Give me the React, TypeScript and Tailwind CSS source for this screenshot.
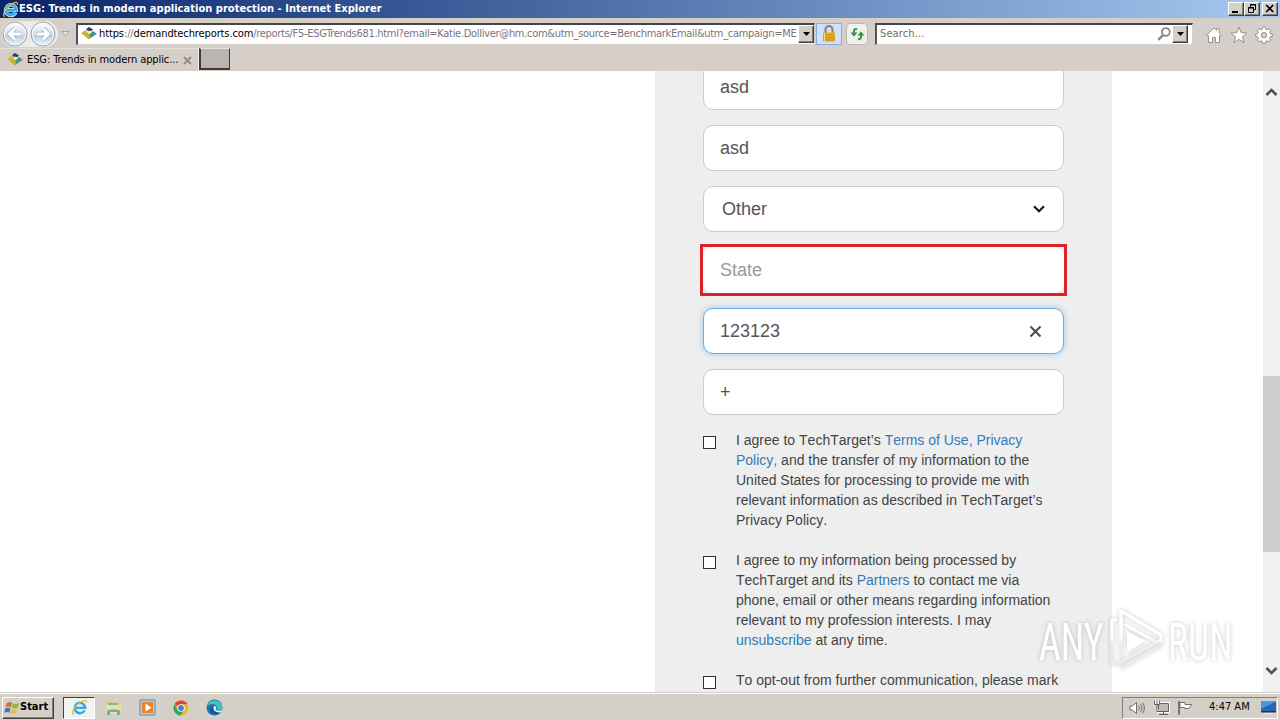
import { FunctionComponent, ReactNode } from "react";

const IeLogo: FunctionComponent<{ size: number }> = ({ size }) => (
  <svg width={size} height={size} viewBox="0 0 18 18" fill="none" className="shrink-0">
    <path d="M14.500 12.200A5.600 5.600 0 1 1 15.100 9.400H5" stroke="#d8f0fc" strokeWidth="3.800" />
    <path d="M14.300 12.200A5.500 5.500 0 1 1 15 9.400H5" stroke="#35a7e4" strokeWidth="2.600" />
    <path
      d="M3.200 16.600C-.6 15.600 3.400 7.600 9.600 3.600c4.200-2.700 7.600-2.900 6.600.4"
      stroke="#eebb2d"
      strokeWidth="1.300"
    />
  </svg>
);

const SiteIcon: FunctionComponent = () => (
  <svg width="16" height="16" viewBox="0 0 16 16" className="shrink-0">
    <path d="M0 7.200 4.500 4l5 5L8 13Z" fill="#e2b320" />
    <path d="m8 13 8-5.200L11.800 5 7 9.400Z" fill="#3d9488" />
    <path d="M2 8.500 8 13.400l1.500-2.900L5.500 7Z" fill="#b5bd35" />
    <path d="m5 3 3.200-2L12 3.400 8.400 6.600Z" fill="#2c3e63" />
    <path d="m6 6 2.300 2.300L11 5.800 8.400 4.500Z" fill="#f3efd2" />
  </svg>
);

const NavCircle: FunctionComponent<{ forward?: boolean }> = ({ forward }) => (
  <svg width="26" height="26" viewBox="0 0 26 26" className="shrink-0">
    <defs>
      <linearGradient id="navFill" x1="0" y1="0" x2="0" y2="1">
        <stop offset="0" stopColor="#fff" />
        <stop offset=".45" stopColor="#dde3ea" />
        <stop offset=".6" stopColor="#c3d1df" />
        <stop offset="1" stopColor="#e8f8fd" />
      </linearGradient>
    </defs>
    <circle cx="13" cy="13" r="12" fill="url(#navFill)" stroke="#93a2b2" />
    <circle cx="13" cy="13" r="10.700" fill="none" stroke="#f5fbff" />
    <path
      d={forward ? "M6 13h12M13 7.500l5.500 5.500-5.500 5.500" : "M20 13H8M13 7.500L7.500 13l5.500 5.500"}
      fill="none"
      stroke="#a3b2c2"
      strokeWidth="4.600"
    />
    <path
      d={forward ? "M6.500 13h12M13 7.500l5.500 5.500-5.500 5.500" : "M19.500 13H8M13 7.500L7.500 13l5.500 5.500"}
      fill="none"
      stroke="#fff"
      strokeWidth="3"
    />
  </svg>
);

const bevel =
  "bg-[#d4d0c8] border border-t-white border-l-white border-r-[#404040] border-b-[#404040] shadow-[inset_-1px_-1px_0_#808080]";

const DropButton: FunctionComponent = () => (
  <div className={`flex h-[18px] w-4 shrink-0 items-center justify-center ${bevel}`}>
    <svg width="7" height="4" viewBox="0 0 7 4">
      <path d="M0 0h7L3.500 4Z" fill="#000" />
    </svg>
  </div>
);

const TitleBar: FunctionComponent = () => (
  <div className="flex h-[18px] items-center bg-linear-to-r from-[#0a246a] to-[#a6caf0] pl-[2px] pr-[2px]">
    <IeLogo size={17} />
    <span className="w-[370px] whitespace-nowrap text-[11px] font-bold tracking-[0.03px] text-white">
      ESG: Trends in modern application protection - Internet Explorer
    </span>
    <div className="ml-auto flex">
      <div className={`h-[14px] w-4 ${bevel}`}>
        <svg width="14" height="12" viewBox="0 0 14 12">
          <path d="M3 8h6v2H3z" />
        </svg>
      </div>
      <div className={`h-[14px] w-4 ${bevel}`}>
        <svg width="14" height="12" viewBox="0 0 14 12" fill="none" stroke="#000">
          <path d="M5.500 4V1.500h5v5H9M5 2h6M3.500 4.500h5v5h-5zM3 5h6" />
        </svg>
      </div>
      <div className={`ml-[2px] h-[14px] w-4 ${bevel}`}>
        <svg width="14" height="12" viewBox="0 0 14 12" fill="none" stroke="#000" strokeWidth="1.700">
          <path d="m3.200 2 7 7M10.200 2l-7 7" />
        </svg>
      </div>
    </div>
  </div>
);

const field =
  "flex h-[22px] items-center bg-white border-t-2 border-l-2 border-t-[#47434a] border-l-[#55515a] border-b border-r border-b-[#d4d0c8] border-r-[#d4d0c8]";

const AddressRow: FunctionComponent = () => (
  <div className="flex h-[29px] items-center">
    <div className="ml-[2px] flex w-[56px] items-center gap-[2px] rounded-full bg-[#eeece9]">
      <NavCircle />
      <NavCircle forward />
    </div>
    <svg width="9" height="6" viewBox="0 0 9 6" className="ml-[3px]">
      <path d="M.8.5h7.400L4.500 5Z" fill="#e6e3de" stroke="#aaa59f" />
    </svg>
    <div className={`ml-[6px] w-[739px] ${field}`}>
      <div className="flex w-[21px] justify-center">
        <SiteIcon />
      </div>
      <div className="w-[699px] whitespace-nowrap text-[11px] tracking-[-0.3px] text-[#77757a]">
        <span className="tracking-[-0.11px]">
          <span className="text-black">https</span>://
          <span className="text-black">demandtechreports.com</span>
        </span>
        /reports/F5-ESGTrends681.html?email=Katie.Dolliver@hm.com&amp;utm_source=BenchmarkEmail&amp;utm_campaign=ME
      </div>
      <DropButton />
    </div>
    <div className="ml-px flex h-[22px] w-[26px] items-center justify-center border border-[#86aee0] bg-[#cfe2fa]">
      <svg width="14" height="17" viewBox="0 0 14 17">
        <path d="M3.500 8V4.500a3.500 3.500 0 0 1 7 0V8" fill="none" stroke="#8c8064" strokeWidth="2" />
        <path d="M1 7.500h12v9H1z" fill="#e9ad25" />
        <path d="M1 10h12M1 12.500h12M1 15h12" stroke="#c98f1f" />
        <path d="M2.500 8v8" stroke="#fbe08a" />
      </svg>
    </div>
    <div className="ml-1 flex h-[22px] w-[22px] items-center justify-center rounded-sm border border-[#bbb9b5] bg-[#eef0ec]">
      <svg width="15" height="14" viewBox="0 0 15 14" fill="none" stroke="#35913c" strokeWidth="2">
        <path d="M7 2.200c-2-.8-3 .3-3 2.300v2" />
        <path d="m.5 5.500 3.500 4 3.500-4Z" fill="#35913c" stroke="none" />
        <path d="M8 12c2 .6 3-.3 3-2.500v-2" />
        <path d="m7.500 8.500 3.500-4 3.500 4Z" fill="#35913c" stroke="none" />
      </svg>
    </div>
    <div className={`ml-[7px] w-[318px] ${field}`}>
      <span className="pl-[3px] text-[11px] tracking-[0.1px] text-[#6d6d6d]">Search...</span>
      <svg width="14" height="14" viewBox="0 0 14 14" className="ml-auto mr-px" fill="none" stroke="#868686">
        <circle cx="8.800" cy="5" r="3.900" strokeWidth="1.800" />
        <path d="M6 8 1.300 12.800" strokeWidth="2.400" />
      </svg>
      <DropButton />
      <div className="w-[4px]" />
    </div>
    <div className="ml-auto mr-[7px] flex items-center gap-[7px] pt-[2px]">
      <svg width="18" height="18" viewBox="0 0 18 18" fill="#fff" stroke="#96918d">
        <path d="M1.500 9 9 1.800l2.800 2.600V2.500h2.400v4.200L16.500 9l-1.400 1.200-.6-.5v6.800h-4v-5h-3v5h-4V9.700l-.6.5Z" />
      </svg>
      <svg width="18" height="18" viewBox="0 0 18 18" fill="#fff" stroke="#96918d">
        <path d="m9 1.200 2.100 5.400 5.800.4-4.400 3.800 1.400 5.700L9 13.400l-4.900 3.100 1.400-5.700L1.100 7l5.800-.4Z" />
      </svg>
      <svg width="18" height="18" viewBox="0 0 18 18" fill="#fff" stroke="#96918d">
        <path d="M7.600 1.200h2.800l.4 2 1.400.6L14 2.600l1.900 1.900-1.200 1.800.6 1.400 2 .4v2.200l-2 .5-.6 1.400 1.200 1.800-1.900 1.900-1.800-1.200-1.400.6-.4 2H7.600l-.4-2-1.400-.6L4 15.900l-1.900-1.900 1.200-1.800-.6-1.400-2-.5V8.100l2-.4.6-1.400L2.100 4.500 4 2.600l1.800 1.200 1.400-.6Z" />
        <circle cx="9" cy="9.200" r="2.700" fill="#d4d0c8" />
      </svg>
    </div>
  </div>
);

const TabRow: FunctionComponent = () => (
  <div className="flex h-[23px] items-start">
    <div className="flex h-[23px] w-[199px] items-center border-t border-r border-t-[#e4e1dc] border-r-[#f5f3f0] pl-[7px]">
      <SiteIcon />
      <span className="ml-1 w-[156px] whitespace-nowrap text-[11px] tracking-[-0.1px] text-black">
        ESG: Trends in modern applic...
      </span>
      <svg width="9" height="9" viewBox="0 0 9 9" stroke="#8f8a86" strokeWidth="1.800">
        <path d="m1 1 7 7M8 1 1 8" />
      </svg>
    </div>
    <div className="h-[22px] w-[31px] border border-b-2 border-l-2 border-[#403c3c] border-t-[#e5e2df] bg-[#bbb4b0]" />
  </div>
);

interface FieldProps {
  value: string;
  focused?: boolean;
  children?: ReactNode;
}

const FormField: FunctionComponent<FieldProps> = ({ value, focused, children }) => (
  <div
    className={`flex h-[46px] w-[361px] shrink-0 items-center justify-between rounded-[10px] border bg-white px-4 text-[18px] text-[#555] ${
      focused
        ? "border-[#66afe9] shadow-[0_0_6px_rgba(102,175,233,0.6)]"
        : "border-[#ccc]"
    }`}
  >
    <span>{value}</span>
    {children}
  </div>
);

const Consent: FunctionComponent<{ children: ReactNode }> = ({ children }) => (
  <div className="flex">
    <div className="mt-[6px] mr-5 h-[13px] w-[13px] shrink-0 border border-[#333] bg-white" />
    <p className="whitespace-nowrap text-[14px] leading-5 text-[#444] [font-kerning:none]">
      {children}
    </p>
  </div>
);

const Link: FunctionComponent<{ children: ReactNode }> = ({ children }) => (
  <span className="text-[#337ab7]">{children}</span>
);

const FormPanel: FunctionComponent = () => (
  <div className="ml-[655px] h-full w-[457px] shrink-0 overflow-hidden bg-[#eee] pl-12 font-['Liberation_Sans',Arial,sans-serif]">
    <div className="-mt-[7px] flex flex-col gap-[15px]">
      <FormField value="asd" />
      <FormField value="asd" />
      <div className="flex h-[46px] w-[361px] items-center justify-between rounded-[10px] border border-[#ccc] bg-white pl-[18px] pr-[18px] text-[18px] text-[#555]">
        <span>Other</span>
        <svg width="12" height="8" viewBox="0 0 12 8" fill="none" stroke="#111" strokeWidth="2">
          <path d="m1 1.300 5 5 5-5" />
        </svg>
      </div>
      {/* required field outline sits outside the input */}
      <div className="-mt-[3px] -mb-[3px] -ml-[3px] h-[52px] w-[367px] border-3 border-[#dd2227]">
        <div className="flex h-[46px] w-[361px] items-center rounded-[10px] bg-white pl-[17px] text-[18px] text-[#999]">
          State
        </div>
      </div>
      <FormField value="123123" focused>
        <svg width="13" height="13" viewBox="0 0 13 13" stroke="#4a4a4a" strokeWidth="2" className="mr-[5px]">
          <path d="m1.500 1.500 10 10M11.500 1.500l-10 10" />
        </svg>
      </FormField>
      <FormField value="+" />
    </div>
    <div className="mt-[15px] flex flex-col gap-5">
      <Consent>
        I agree to TechTarget’s <Link>Terms of Use, Privacy</Link>
        <br />
        <Link>Policy,</Link> and the transfer of my information to the
        <br />
        United States for processing to provide me with
        <br />
        relevant information as described in TechTarget’s
        <br />
        Privacy Policy.
      </Consent>
      <Consent>
        I agree to my information being processed by
        <br />
        TechTarget and its <Link>Partners</Link> to contact me via
        <br />
        phone, email or other means regarding information
        <br />
        relevant to my profession interests. I may
        <br />
        <Link>unsubscribe</Link> at any time.
      </Consent>
      <Consent>To opt-out from further communication, please mark</Consent>
    </div>
  </div>
);

const ScrollBar: FunctionComponent = () => (
  <div className="ml-auto flex w-[17px] flex-col items-center bg-[#f0f0f0]">
    <svg width="13" height="9" viewBox="0 0 13 9" fill="none" stroke="#505050" strokeWidth="2.600" className="mt-[17px]">
      <path d="m1.500 7 5-5 5 5" />
    </svg>
    <div className="mt-[279px] h-[176px] w-full bg-[#cdcdcd]" />
    <svg width="13" height="9" viewBox="0 0 13 9" fill="none" stroke="#505050" strokeWidth="2.600" className="mt-auto mb-[17px]">
      <path d="m1.500 2 5 5 5-5" />
    </svg>
  </div>
);

const Watermark: FunctionComponent = () => (
  <svg
    width="210"
    height="70"
    viewBox="0 0 210 70"
    className="absolute top-[605px] left-[1030px] drop-shadow-[0_0_2px_rgba(0,0,0,0.22)]"
  >
    <defs>
      <linearGradient id="markFade" x1="0" y1="0" x2="0" y2="70" gradientUnits="userSpaceOnUse">
        <stop offset=".46" stopColor="#fff" />
        <stop offset=".56" stopColor="#ededed" stopOpacity=".8" />
      </linearGradient>
    </defs>
    <g fill="url(#markFade)" fontFamily="Roboto, sans-serif" fontSize="51">
      <text transform="translate(9 55) scale(.66 1)" textLength="98" lengthAdjust="spacingAndGlyphs">
        ANY
      </text>
      <text transform="translate(138 55) scale(.66 1)" textLength="98" lengthAdjust="spacingAndGlyphs">
        RUN
      </text>
    </g>
    <g fill="none" stroke="url(#markFade)" strokeWidth="3.500" strokeLinejoin="round">
      <path d="M91 53V6l40 24v5L93 56" />
      <path d="M87 15h-5v42l6 2 43-24M91 63l40-23v-6" />
      <path d="m94 19 34 19" strokeWidth="3" />
    </g>
    <path d="m97 26 19 10-19 11Z" fill="#fff" />
  </svg>
);

const Taskbar: FunctionComponent = () => (
  <div className="flex h-[28px] shrink-0 items-center border-t border-t-[#d4d0c8] bg-[#d4d0c8] pt-[2px] shadow-[inset_0_1px_0_#fff]">
    <div className={`ml-[2px] flex h-[22px] w-[52px] items-center pl-px ${bevel}`}>
      <svg width="16" height="16" viewBox="0 0 16 16" className="shrink-0">
        <path d="M2.800 3C5 1.500 6.700 2 8 2.800L6.800 7.300C5 6.200 3.400 6.400 1.600 7.300Z" fill="#e8652a" />
        <path d="M8.800 3.200c2 1 4 1 6.200-.1l-1.300 4.500c-2 1.200-4.100 1-6.100 0Z" fill="#8db93c" />
        <path d="M1.400 8.300c2-.9 3.500-.9 5.200 0l-1.200 4.500c-1.800-1-3.500-.9-5.200 0Z" fill="#2f80c4" />
        <path d="M7.400 8.700c2 1 4 1 6 0l-1.200 4.500c-2 1.100-4 1-6 0Z" fill="#f1c135" />
      </svg>
      <span className="text-[11px] font-bold text-black">Start</span>
    </div>
    <div className="ml-[9px] flex h-[22px] w-8 items-center justify-center border border-t-[#404040] border-l-[#404040] border-r-white border-b-white bg-[#f2f2f0]">
      <IeLogo size={17} />
    </div>
    <svg width="17" height="16" viewBox="0 0 17 16" className="ml-[10px]">
      <path d="M2 1h6l1.500 2H15v9H2z" fill="#e9cc69" />
      <path d="M3 3h10v4H3z" fill="#78b4bb" />
      <path d="M1 5h15v9H1z" fill="#f4df8d" />
      <path d="M2 15v-4c0-2 13-2 13 0v4h-3v-3H5v3Z" fill="#65acd3" />
    </svg>
    <svg width="17" height="17" viewBox="0 0 17 17" className="ml-[17px]">
      <path d="M1 1h15v15H1z" fill="#a9d1ea" stroke="#4c8dbd" />
      <path d="M3 3h11v11H3z" fill="#ef8220" />
      <path d="m6.500 4.500 6 4-6 4Z" fill="#fff" />
    </svg>
    <svg width="16" height="16" viewBox="0 0 16 16" className="ml-[17px]">
      <circle cx="8" cy="8" r="7.500" fill="#eabb30" />
      <path d="M8 8 1.500 4.300A7.500 7.500 0 0 1 14.500 4.300H8Z" fill="#df4436" />
      <path d="M1.500 4.300A7.500 7.500 0 0 0 7.700 15.500L11 10 8 8 4.700 9.800Z" fill="#35a355" />
      <circle cx="8" cy="8" r="3.800" fill="#fff" />
      <circle cx="8" cy="8" r="2.900" fill="#437edb" />
    </svg>
    <svg width="17" height="17" viewBox="0 0 17 17" className="ml-[17px]">
      <circle cx="8.500" cy="8.500" r="8" fill="#1978b8" />
      <path d="M1 7C3 0 15-1 16.500 8c0 3-3.500 4-6 2.500C12 8 10 5 6.500 5 4 5 2 6 1 7Z" fill="#43c4b2" />
      <path d="M7 7c-2 4 1 7 7 6-2 3-10 3-10-2 0-2 1-3.500 3-4Z" fill="#174f92" />
      <path d="M8 7c3 0 2 2.500 1.700 3.500 1.500 2 4.500 1.500 6.800.3-.5 1.500-1.500 2.200-3 2.700C9 13.500 6.500 10 8 7Z" fill="#e7f4f5" />
    </svg>
    <div className="ml-auto mr-[2px] flex h-[22px] w-[156px] items-center border border-t-[#808080] border-l-[#808080] border-r-white border-b-white pl-[6px]">
      <svg width="17" height="14" viewBox="0 0 17 14" fill="none" stroke="#716d6a">
        <path d="M1 5h2.500L7.500 1.500v11L3.500 9H1Z" fill="#fff" />
        <path d="M9.500 4.500c1 1.500 1 3.500 0 5M11.500 3c2 2.500 2 5.500 0 8M13.500 1.500c2.500 3.500 2.500 7.500 0 11" />
      </svg>
      <svg width="17" height="16" viewBox="0 0 17 16" fill="none" stroke="#625e5c" className="ml-[7px]">
        <path d="M5.500 3.500h10v8h-10z" fill="#bbb" stroke="#fff" strokeWidth="3" />
        <path d="M5.500 3.500h10v8h-10zM6 14.500h9M10.500 12v2" fill="#bbb" />
        <path d="M1.500.5v4h5v-4M4 .5v4M4 5v6.500h2" fill="#fff" />
      </svg>
      <svg width="16" height="16" viewBox="0 0 16 16" fill="#fff" stroke="#797470" className="ml-[7px]">
        <path d="M1.500 1.500h1v13h-1zM3 2.500h5v2h6.500L12 8.500H7.500v-1H3Z" />
      </svg>
      <span className="ml-[16px] w-[47px] whitespace-nowrap text-[11px] text-black">4:47 AM</span>
      <svg width="16" height="15" viewBox="0 0 16 15" className="ml-[4px] shrink-0">
        <path d="M1 1.500h15v10H1z" fill="#2866b9" />
        <path d="M1 1.500h15L1 9Z" fill="#4998df" />
        <path d="M1 11h15v1.500H1z" fill="#173764" />
        <path d="M4 13h7v1H4z" fill="#eee" />
      </svg>
    </div>
  </div>
);

const App: FunctionComponent = () => (
  <div className="relative flex h-[720px] w-[1280px] flex-col overflow-hidden bg-[#d5cec9] font-['DejaVu_Sans_Condensed','DejaVu_Sans',sans-serif] [font-stretch:condensed]">
    <TitleBar />
    <div className="h-px bg-[#d4d0c0]" />
    <AddressRow />
    <TabRow />
    <main className="flex h-[621px] shrink-0 bg-white">
      <FormPanel />
      <ScrollBar />
    </main>
    <Taskbar />
    <Watermark />
  </div>
);

export default App;
